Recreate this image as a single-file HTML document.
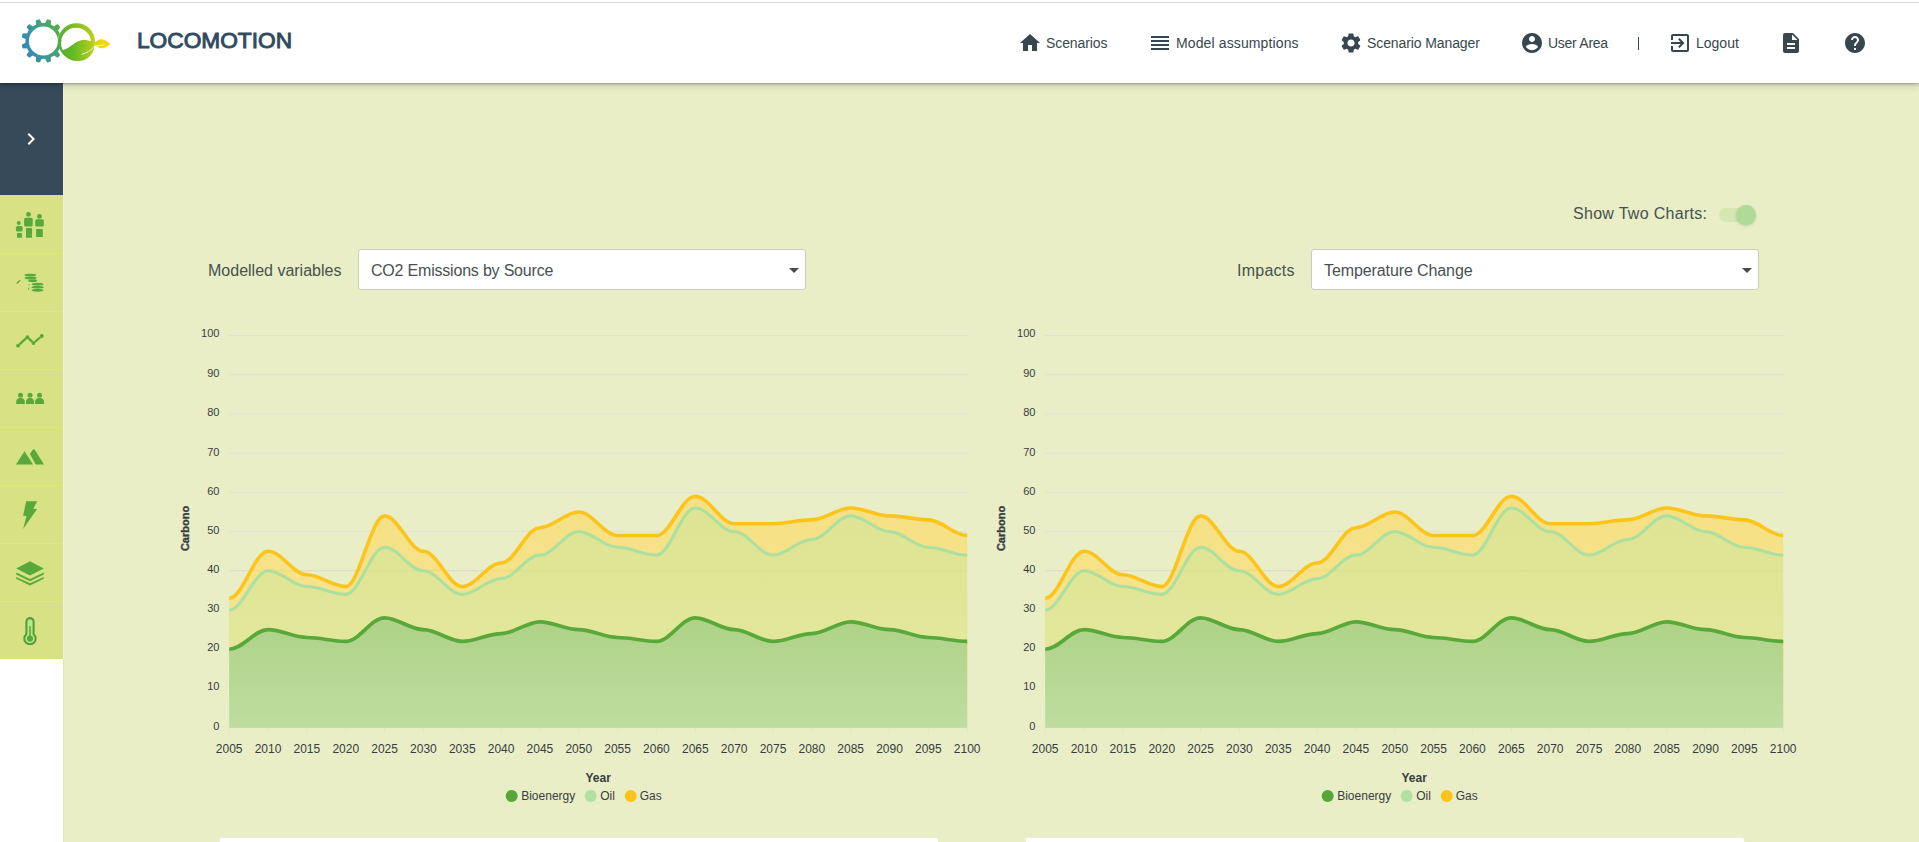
<!DOCTYPE html>
<html><head><meta charset="utf-8"><title>LOCOMOTION</title>
<style>
html,body{margin:0;padding:0;}
html{width:1919px;height:842px;overflow:hidden;background:#e9eec7;}
body{width:1919px;height:842px;overflow:hidden;position:relative;background:#e9eec7;font-family:"Liberation Sans",sans-serif;}
#hdr{position:absolute;left:0;top:0;width:1919px;height:82.5px;background:#fff;border-top:1px solid #fff;box-sizing:border-box;box-shadow:0 1px 3px rgba(0,0,0,.28),0 3px 7px rgba(0,0,0,.13);z-index:5;}
#hdr:before{content:'';position:absolute;left:0;top:0.5px;width:100%;height:1px;background:#d6d6d6;}
#side{position:absolute;left:0;top:82px;width:63px;height:760px;background:#fff;z-index:2;box-shadow:1px 0 0 rgba(120,130,90,.07);}
#side .sep{position:absolute;left:0;top:113px;width:63px;height:464px;background:#dadeb6;}
#side .tog{position:absolute;left:0;top:0;width:63px;height:113px;background:#364a59;}
#side .it{position:absolute;left:0;width:63px;height:57px;background:#d8e285;}
.nav{position:absolute;top:0;font-size:14px;color:#37474f;line-height:20px;white-space:nowrap;}
.lbl{position:absolute;font-size:16px;color:#47514f;white-space:nowrap;}
.sel{position:absolute;width:446px;height:39px;background:#fff;border:1px solid #cbcdc1;border-radius:3px;box-sizing:content-box;}
.sel span{position:absolute;left:12px;top:11.6px;font-size:16px;color:#495054;white-space:nowrap;}
.sel i{position:absolute;right:6px;top:18px;width:0;height:0;border-left:5px solid transparent;border-right:5px solid transparent;border-top:5px solid #4a4a4a;}
.wb{position:absolute;top:838px;height:4px;width:718px;background:#fff;border-radius:2px 2px 0 0;box-shadow:0 0 3px rgba(255,255,255,.6);}
svg text{font-family:"Liberation Sans",sans-serif;}
.yl{font-size:11px;fill:#373d3f;}
.xl{font-size:12px;fill:#373d3f;}
.at{font-size:12px;font-weight:bold;fill:#373d3f;}
.at2{font-size:11px;font-weight:bold;fill:#373d3f;stroke:#373d3f;stroke-width:0.35px;}
.lg{font-size:12px;fill:#373d3f;}
</style></head><body>

<div id="hdr">
<svg style="position:absolute;left:0;top:-1px" width="130" height="82" viewBox="0 0 130 82">
<defs>
<linearGradient id="lg1" gradientUnits="userSpaceOnUse" x1="21" y1="50" x2="64" y2="30"><stop offset="0" stop-color="#2f84c4"/><stop offset="0.45" stop-color="#3d9c93"/><stop offset="1" stop-color="#57b13f"/></linearGradient>
<linearGradient id="lg2" gradientUnits="userSpaceOnUse" x1="58" y1="0" x2="96" y2="0"><stop offset="0" stop-color="#52ad3c"/><stop offset="0.5" stop-color="#86bf22"/><stop offset="1" stop-color="#c4d31b"/></linearGradient>
<linearGradient id="lg4" gradientUnits="userSpaceOnUse" x1="61" y1="0" x2="95" y2="0"><stop offset="0" stop-color="#56b030"/><stop offset="0.35" stop-color="#62b925"/><stop offset="1" stop-color="#c0d01e"/></linearGradient>
<linearGradient id="lg3" gradientUnits="userSpaceOnUse" x1="93" y1="0" x2="110" y2="0"><stop offset="0" stop-color="#cfd61c"/><stop offset="0.6" stop-color="#f5d90a"/><stop offset="1" stop-color="#ffd200"/></linearGradient>
</defs>
<path fill="url(#lg1)" fill-rule="evenodd" d="M 25.40 40.90 a 18.00 18.00 0 1 1 36.00 0 a 18.00 18.00 0 1 1 -36.00 0 Z M 28.90 40.90 a 14.50 14.50 0 1 0 29.00 0 a 14.50 14.50 0 1 0 -29.00 0 Z"/>
<path fill="url(#lg1)" stroke="url(#lg1)" stroke-width="2.4" stroke-linejoin="round" d="M56.61 51.60 L58.86 54.82 L57.32 56.36 L54.10 54.11 Z M49.49 56.77 L49.83 60.68 L47.72 61.25 L46.06 57.69 Z M40.74 57.69 L39.08 61.25 L36.97 60.68 L37.31 56.77 Z M32.70 54.11 L29.48 56.36 L27.94 54.82 L30.19 51.60 Z M27.53 46.99 L23.62 47.33 L23.05 45.22 L26.61 43.56 Z M26.61 38.24 L23.05 36.58 L23.62 34.47 L27.53 34.81 Z M30.19 30.20 L27.94 26.98 L29.48 25.44 L32.70 27.69 Z M37.31 25.03 L36.97 21.12 L39.08 20.55 L40.74 24.11 Z M46.06 24.11 L47.72 20.55 L49.83 21.12 L49.49 25.03 Z M54.10 27.69 L57.32 25.44 L58.86 26.98 L56.61 30.20 Z "/>
<path fill="none" stroke="#fff" stroke-width="0.7" d="M 61.6 30.5 C 59.6 34, 58.2 37.5, 57.9 41"/>
<path fill="url(#lg2)" fill-rule="evenodd" d="M 58.00 41.70 a 18.50 18.50 0 1 1 37.00 0 a 18.50 18.50 0 1 1 -37.00 0 Z M 61.00 42.85 a 15.05 15.05 0 1 0 30.10 0 a 15.05 15.05 0 1 0 -30.10 0 Z"/>
<path fill="url(#lg4)" d="M 61.4 50.4 C 66 49.5, 69 47.5, 72.1 45 C 75 42.5, 77 41.2, 80.5 40.4 C 84 39.7, 89 40.2, 92.6 42 C 94 44, 94.6 45.5, 94.3 47.5 C 93.6 51, 92.4 53.5, 90 55.9 C 87.5 58.5, 84.5 60.2, 81 60.8 C 77.5 61.3, 73.5 61, 70 59.4 C 66.5 57.8, 63.2 54.5, 61.4 50.4 Z"/>
<path fill="url(#lg3)" d="M 92.8 42.2 C 94.5 42.6, 96 41.8, 97.5 40.6 C 99.5 39, 101.5 38.8, 104 39.8 C 106.5 40.8, 108.5 42.2, 110.2 44 C 108.5 45.6, 106.5 47, 104 47.9 C 101.5 48.7, 99 48.3, 97.2 46.6 C 96.2 45.7, 95.2 45.3, 94.2 45.6 Z"/>
<path fill="none" stroke="#fff" stroke-width="0.75" stroke-linecap="round" d="M 82.2 54.3 C 86.5 53, 91.5 50.5, 94.2 46.2 C 97 45.6, 101 45.6, 104.5 44.6"/>
</svg>
<div style="position:absolute;left:137px;top:25.5px;font-size:22.7px;font-weight:normal;color:#2f4a60;-webkit-text-stroke:0.95px #2f4a60;letter-spacing:0px;line-height:26px;white-space:nowrap;">LOCOMOTION</div>
<svg style="position:absolute;left:1018px;top:30px" width="24" height="24" viewBox="0 0 24 24"><path fill="#37474f" d="M10 20v-6h4v6h5v-8h3L12 3 2 12h3v8z"/></svg>
<div class="nav" style="left:1046px;top:32px;letter-spacing:-0.1px">Scenarios</div>
<svg style="position:absolute;left:1148px;top:30px" width="24" height="24" viewBox="0 0 24 24"><path fill="#37474f" d="M3 15h18v-2H3v2zm0 4h18v-2H3v2zm0-8h18V9H3v2zm0-6v2h18V5H3z"/></svg>
<div class="nav" style="left:1176px;top:32px;letter-spacing:0.12px">Model assumptions</div>
<svg style="position:absolute;left:1339px;top:30px" width="24" height="24" viewBox="0 0 24 24"><path fill="#37474f" d="M19.14 12.94c.04-.3.06-.61.06-.94 0-.32-.02-.64-.07-.94l2.03-1.58c.18-.14.23-.41.12-.61l-1.92-3.32c-.12-.22-.37-.29-.59-.22l-2.39.96c-.5-.38-1.03-.7-1.62-.94l-.36-2.54c-.04-.24-.24-.41-.48-.41h-3.84c-.24 0-.43.17-.47.41l-.36 2.54c-.59.24-1.13.57-1.62.94l-2.39-.96c-.22-.08-.47 0-.59.22L2.74 8.87c-.12.21-.08.47.12.61l2.03 1.58c-.05.3-.09.63-.09.94s.02.64.07.94l-2.03 1.58c-.18.14-.23.41-.12.61l1.92 3.32c.12.22.37.29.59.22l2.39-.96c.5.38 1.03.7 1.62.94l.36 2.54c.05.24.24.41.48.41h3.84c.24 0 .44-.17.47-.41l.36-2.54c.59-.24 1.13-.56 1.62-.94l2.39.96c.22.08.47 0 .59-.22l1.92-3.32c.12-.22.07-.47-.12-.61l-2.01-1.58zM12 15.6c-1.98 0-3.6-1.62-3.6-3.6s1.62-3.6 3.6-3.6 3.6 1.62 3.6 3.6-1.62 3.6-3.6 3.6z"/></svg>
<div class="nav" style="left:1367px;top:32px;letter-spacing:-0.1px">Scenario Manager</div>
<svg style="position:absolute;left:1520px;top:30px" width="24" height="24" viewBox="0 0 24 24"><path fill="#37474f" d="M12 2C6.48 2 2 6.48 2 12s4.48 10 10 10 10-4.48 10-10S17.52 2 12 2zm0 3c1.66 0 3 1.34 3 3s-1.34 3-3 3-3-1.34-3-3 1.34-3 3-3zm0 14.2c-2.5 0-4.71-1.28-6-3.22.03-1.99 4-3.08 6-3.08 1.99 0 5.97 1.09 6 3.08-1.29 1.94-3.5 3.22-6 3.22z"/></svg>
<div class="nav" style="left:1548px;top:32px;letter-spacing:-0.27px">User Area</div>
<div style="position:absolute;left:1637.5px;top:36px;width:1px;height:13px;background:#37474f"></div>
<svg style="position:absolute;left:1668px;top:30px" width="24" height="24" viewBox="0 0 24 24"><path fill="#37474f" d="M10.09 15.59L11.5 17l5-5-5-5-1.41 1.41L12.67 11H3v2h9.67l-2.58 2.59zM19 3H5c-1.11 0-2 .9-2 2v4h2V5h14v14H5v-4H3v4c0 1.1.89 2 2 2h14c1.1 0 2-.9 2-2V5c0-1.1-.9-2-2-2z"/></svg>
<div class="nav" style="left:1696px;top:32px">Logout</div>
<svg style="position:absolute;left:1779px;top:30px" width="24" height="24" viewBox="0 0 24 24"><path fill="#37474f" d="M14 2H6c-1.1 0-1.99.9-1.99 2L4 20c0 1.1.89 2 1.99 2H18c1.1 0 2-.9 2-2V8l-6-6zm2 16H8v-2h8v2zm0-4H8v-2h8v2zm-3-5V3.5L18.5 9H13z"/></svg>
<svg style="position:absolute;left:1843px;top:30px" width="24" height="24" viewBox="0 0 24 24"><path fill="#37474f" d="M12 2C6.48 2 2 6.48 2 12s4.48 10 10 10 10-4.48 10-10S17.52 2 12 2zm1 17h-2v-2h2v2zm2.07-7.75l-.9.92C13.45 12.9 13 13.5 13 15h-2v-.5c0-1.1.45-2.1 1.17-2.83l1.24-1.26c.37-.36.59-.86.59-1.41 0-1.1-.9-2-2-2s-2 .9-2 2H8c0-2.21 1.79-4 4-4s4 1.79 4 4c0 .88-.36 1.68-.93 2.25z"/></svg>
</div>
<div id="side"><div class="sep"></div><div class="tog"><svg style="position:absolute;left:19px;top:45px" width="24" height="24" viewBox="0 0 24 24"><path fill="#fff" d="M10 6L8.59 7.41 13.17 12l-4.58 4.59L10 18l6-6z"/></svg></div>
<div class="it" style="top:113px;height:57.5px"></div>
<div class="it" style="top:171.5px;height:57px"></div>
<div class="it" style="top:229.5px;height:57px"></div>
<div class="it" style="top:287.5px;height:57px"></div>
<div class="it" style="top:345.5px;height:57px"></div>
<div class="it" style="top:403.5px;height:57px"></div>
<div class="it" style="top:461.5px;height:57px"></div>
<div class="it" style="top:519.5px;height:57.5px"></div>
</div>
<div style="position:absolute;left:63px;top:82px;width:1px;height:577px;background:rgba(255,255,255,.45);z-index:2"></div>
<svg style="position:absolute;left:0;top:0;z-index:3" width="64" height="842" viewBox="0 0 64 842">
<g fill="#5aa83a" stroke="#b4ee86" stroke-opacity="0.55" stroke-width="0.9" paint-order="stroke">
<circle cx="18.8" cy="223.0" r="1.9"/>
<rect x="15.9" y="225.9" width="6.7" height="5.7" rx="1.6"/>
<rect x="17.0" y="233.0" width="4.9" height="4.8" rx="0.4"/>
<circle cx="28.5" cy="214.3" r="2.4"/>
<rect x="24.1" y="217.8" width="8.6" height="8.8" rx="1.6"/>
<rect x="26.0" y="228.1" width="6.0" height="9.7" rx="0.4"/>
<circle cx="39.5" cy="216.4" r="2.4"/>
<rect x="35.2" y="219.3" width="8.6" height="7.3" rx="1.6"/>
<rect x="36.1" y="229.0" width="6.7" height="7.9" rx="0.4"/>
<rect x="24.3" y="274.2" width="12.2" height="7.4" rx="5" ry="1.6" fill="#b4ee86" fill-opacity="0.7" stroke="none"/>
<rect x="31.4" y="283.4" width="12.4" height="7.8" rx="5" ry="1.6" fill="#b4ee86" fill-opacity="0.7" stroke="none"/>
<ellipse cx="30.4" cy="275.1" rx="6.0" ry="1.45"/>
<ellipse cx="30.6" cy="278.0" rx="6.2" ry="1.45"/>
<ellipse cx="32.6" cy="280.8" rx="4.4" ry="1.45"/>
<ellipse cx="37.6" cy="284.2" rx="6.0" ry="1.45"/>
<ellipse cx="37.6" cy="287.3" rx="6.2" ry="1.45"/>
<ellipse cx="37.6" cy="290.3" rx="6.0" ry="1.45"/>
<path d="M 16.0 283.8 L 18.6 280.6 L 21.0 280.0 L 18.0 283.6 Z"/>
<path d="M 28.8 284.2 l 0.9 -0.3 l -0.3 1.6 l -0.9 0.3 Z"/>
<path d="M 28.4 287.8 l 1.0 -0.4 l -0.4 2.0 l -1.0 0.4 Z"/>
<path fill="none" stroke="#5aa83a" stroke-opacity="1" stroke-width="2.3" stroke-linejoin="round" stroke-linecap="round" d="M 18.1 345.7 L 27.4 337.2 L 33.5 343.1 L 41.8 336.0"/>
<circle cx="18.1" cy="345.7" r="1.9"/>
<circle cx="27.4" cy="337.2" r="1.9"/>
<circle cx="33.5" cy="343.1" r="1.9"/>
<circle cx="41.8" cy="336.0" r="1.9"/>
<circle cx="20.5" cy="395.3" r="2.5"/>
<path d="M 16.2 404.0 L 16.2 401.6 C 16.2 399.6 17.6 398.4 19.3 398.0 L 21.7 398.0 C 23.4 398.4 24.8 399.6 24.8 401.6 L 24.8 404.0 Z"/>
<circle cx="30.0" cy="395.3" r="2.5"/>
<path d="M 26.0 404.0 L 26.0 401.6 C 26.0 399.6 27.4 398.4 28.8 398.0 L 31.2 398.0 C 32.6 398.4 34.0 399.6 34.0 401.6 L 34.0 404.0 Z"/>
<circle cx="39.5" cy="395.3" r="2.5"/>
<path d="M 35.0 404.0 L 35.0 401.6 C 35.0 399.6 36.4 398.4 38.3 398.0 L 40.7 398.0 C 42.6 398.4 44.0 399.6 44.0 401.6 L 44.0 404.0 Z"/>
<path d="M 24.5 451.3 L 33.0 464.6 L 16.0 464.6 Z"/>
<path d="M 32.9 449.4 L 34.6 449.4 L 44.0 464.6 L 35.8 464.6 L 29.9 454.0 Z"/>
<path d="M 26.2 501.2 L 37.1 501.2 L 33.3 508.7 L 37.1 508.9 L 23.1 529.0 L 26.5 516.0 L 23.1 515.7 Z"/>
<path d="M 30.0 561.3 L 43.8 568.5 L 30.0 575.6 L 16.2 568.5 Z"/>
<path d="M 16.2 572.6 L 30.0 579.0 L 43.8 572.6 L 43.8 574.4 L 30.0 581.2 L 16.2 574.4 Z"/>
<path d="M 16.2 576.9 L 30.0 583.3 L 43.8 576.9 L 43.8 578.7 L 30.0 585.5 L 16.2 578.7 Z"/>
</g>
<path fill="#b6ea8a" stroke="#579f37" stroke-width="2.1" stroke-linejoin="round" d="M 26.4 621.7 a 3.6 3.6 0 0 1 7.2 0 L 33.6 634.2 a 5.7 5.7 0 1 1 -7.2 0 Z"/>
<circle cx="30.0" cy="638.6" r="3.1" fill="#5aa83a"/>
<rect x="29.2" y="626.2" width="1.6" height="11" fill="#5aa83a"/>
</svg>
<div class="lbl" style="left:1573px;top:204.5px;letter-spacing:0.3px">Show Two Charts:</div>
<div style="position:absolute;left:1718.5px;top:207.5px;width:35.5px;height:14px;border-radius:7px;background:#d6e7b4"></div>
<div style="position:absolute;left:1736px;top:204.5px;width:20px;height:20px;border-radius:10px;background:#afdb96;box-shadow:0 1px 3px rgba(0,0,0,.16)"></div>
<div class="lbl" style="left:208px;top:261.6px">Modelled variables</div>
<div class="sel" style="left:358px;top:249px"><span style="letter-spacing:-0.2px">CO2 Emissions by Source</span><i></i></div>
<div class="lbl" style="left:1237px;top:261.6px;letter-spacing:0.25px">Impacts</div>
<div class="sel" style="left:1311px;top:249px"><span style="letter-spacing:-0.1px">Temperature Change</span><i></i></div>
<svg style="position:absolute;left:0;top:0;z-index:1" width="1919" height="842" viewBox="0 0 1919 842">
<defs>
<linearGradient id="g_bio" gradientUnits="userSpaceOnUse" x1="0" y1="618" x2="0" y2="728"><stop offset="0" stop-color="#aed287"/><stop offset="1" stop-color="#bedda0"/></linearGradient>
<linearGradient id="g_oil" gradientUnits="userSpaceOnUse" x1="0" y1="508" x2="0" y2="650"><stop offset="0" stop-color="#dee493"/><stop offset="1" stop-color="#e3e79a"/></linearGradient>
<linearGradient id="g_gas" gradientUnits="userSpaceOnUse" x1="0" y1="496" x2="0" y2="620"><stop offset="0" stop-color="#f5e084"/><stop offset="1" stop-color="#f6e38c"/></linearGradient>
</defs>
<g>
<line x1="229.2" x2="967.2" y1="727.70" y2="727.70" stroke="#e0e1d5" stroke-width="1"/>
<text x="219.4" y="729.50" text-anchor="end" class="yl">0</text>
<line x1="229.2" x2="967.2" y1="688.48" y2="688.48" stroke="#e0e1d5" stroke-width="1"/>
<text x="219.4" y="690.28" text-anchor="end" class="yl">10</text>
<line x1="229.2" x2="967.2" y1="649.26" y2="649.26" stroke="#e0e1d5" stroke-width="1"/>
<text x="219.4" y="651.06" text-anchor="end" class="yl">20</text>
<line x1="229.2" x2="967.2" y1="610.04" y2="610.04" stroke="#e0e1d5" stroke-width="1"/>
<text x="219.4" y="611.84" text-anchor="end" class="yl">30</text>
<line x1="229.2" x2="967.2" y1="570.82" y2="570.82" stroke="#e0e1d5" stroke-width="1"/>
<text x="219.4" y="573.32" text-anchor="end" class="yl">40</text>
<line x1="229.2" x2="967.2" y1="531.60" y2="531.60" stroke="#e0e1d5" stroke-width="1"/>
<text x="219.4" y="534.10" text-anchor="end" class="yl">50</text>
<line x1="229.2" x2="967.2" y1="492.38" y2="492.38" stroke="#e0e1d5" stroke-width="1"/>
<text x="219.4" y="494.88" text-anchor="end" class="yl">60</text>
<line x1="229.2" x2="967.2" y1="453.16" y2="453.16" stroke="#e0e1d5" stroke-width="1"/>
<text x="219.4" y="455.66" text-anchor="end" class="yl">70</text>
<line x1="229.2" x2="967.2" y1="413.94" y2="413.94" stroke="#e0e1d5" stroke-width="1"/>
<text x="219.4" y="416.44" text-anchor="end" class="yl">80</text>
<line x1="229.2" x2="967.2" y1="374.72" y2="374.72" stroke="#e0e1d5" stroke-width="1"/>
<text x="219.4" y="377.22" text-anchor="end" class="yl">90</text>
<line x1="229.2" x2="967.2" y1="335.50" y2="335.50" stroke="#e0e1d5" stroke-width="1"/>
<text x="219.4" y="337.30" text-anchor="end" class="yl">100</text>
<line x1="229.20" x2="229.20" y1="727.7" y2="733.7" stroke="#e2e7c3" stroke-width="1"/>
<text x="229.20" y="752.6" text-anchor="middle" class="xl">2005</text>
<line x1="268.04" x2="268.04" y1="727.7" y2="733.7" stroke="#e2e7c3" stroke-width="1"/>
<text x="268.04" y="752.6" text-anchor="middle" class="xl">2010</text>
<line x1="306.88" x2="306.88" y1="727.7" y2="733.7" stroke="#e2e7c3" stroke-width="1"/>
<text x="306.88" y="752.6" text-anchor="middle" class="xl">2015</text>
<line x1="345.73" x2="345.73" y1="727.7" y2="733.7" stroke="#e2e7c3" stroke-width="1"/>
<text x="345.73" y="752.6" text-anchor="middle" class="xl">2020</text>
<line x1="384.57" x2="384.57" y1="727.7" y2="733.7" stroke="#e2e7c3" stroke-width="1"/>
<text x="384.57" y="752.6" text-anchor="middle" class="xl">2025</text>
<line x1="423.41" x2="423.41" y1="727.7" y2="733.7" stroke="#e2e7c3" stroke-width="1"/>
<text x="423.41" y="752.6" text-anchor="middle" class="xl">2030</text>
<line x1="462.25" x2="462.25" y1="727.7" y2="733.7" stroke="#e2e7c3" stroke-width="1"/>
<text x="462.25" y="752.6" text-anchor="middle" class="xl">2035</text>
<line x1="501.09" x2="501.09" y1="727.7" y2="733.7" stroke="#e2e7c3" stroke-width="1"/>
<text x="501.09" y="752.6" text-anchor="middle" class="xl">2040</text>
<line x1="539.94" x2="539.94" y1="727.7" y2="733.7" stroke="#e2e7c3" stroke-width="1"/>
<text x="539.94" y="752.6" text-anchor="middle" class="xl">2045</text>
<line x1="578.78" x2="578.78" y1="727.7" y2="733.7" stroke="#e2e7c3" stroke-width="1"/>
<text x="578.78" y="752.6" text-anchor="middle" class="xl">2050</text>
<line x1="617.62" x2="617.62" y1="727.7" y2="733.7" stroke="#e2e7c3" stroke-width="1"/>
<text x="617.62" y="752.6" text-anchor="middle" class="xl">2055</text>
<line x1="656.46" x2="656.46" y1="727.7" y2="733.7" stroke="#e2e7c3" stroke-width="1"/>
<text x="656.46" y="752.6" text-anchor="middle" class="xl">2060</text>
<line x1="695.31" x2="695.31" y1="727.7" y2="733.7" stroke="#e2e7c3" stroke-width="1"/>
<text x="695.31" y="752.6" text-anchor="middle" class="xl">2065</text>
<line x1="734.15" x2="734.15" y1="727.7" y2="733.7" stroke="#e2e7c3" stroke-width="1"/>
<text x="734.15" y="752.6" text-anchor="middle" class="xl">2070</text>
<line x1="772.99" x2="772.99" y1="727.7" y2="733.7" stroke="#e2e7c3" stroke-width="1"/>
<text x="772.99" y="752.6" text-anchor="middle" class="xl">2075</text>
<line x1="811.83" x2="811.83" y1="727.7" y2="733.7" stroke="#e2e7c3" stroke-width="1"/>
<text x="811.83" y="752.6" text-anchor="middle" class="xl">2080</text>
<line x1="850.67" x2="850.67" y1="727.7" y2="733.7" stroke="#e2e7c3" stroke-width="1"/>
<text x="850.67" y="752.6" text-anchor="middle" class="xl">2085</text>
<line x1="889.52" x2="889.52" y1="727.7" y2="733.7" stroke="#e2e7c3" stroke-width="1"/>
<text x="889.52" y="752.6" text-anchor="middle" class="xl">2090</text>
<line x1="928.36" x2="928.36" y1="727.7" y2="733.7" stroke="#e2e7c3" stroke-width="1"/>
<text x="928.36" y="752.6" text-anchor="middle" class="xl">2095</text>
<line x1="967.20" x2="967.20" y1="727.7" y2="733.7" stroke="#e2e7c3" stroke-width="1"/>
<text x="967.20" y="752.6" text-anchor="middle" class="xl">2100</text>
<path d="M 229.20 598.27 C 242.79 598.27 254.45 551.21 268.04 551.21 C 281.64 551.21 293.29 574.74 306.88 574.74 C 320.48 574.74 332.13 586.51 345.73 586.51 C 359.32 586.51 370.97 515.91 384.57 515.91 C 398.16 515.91 409.82 551.21 423.41 551.21 C 437.01 551.21 448.66 586.51 462.25 586.51 C 475.85 586.51 487.50 562.98 501.09 562.98 C 514.69 562.98 526.34 527.68 539.94 527.68 C 553.53 527.68 565.18 511.99 578.78 511.99 C 592.37 511.99 604.03 535.52 617.62 535.52 C 631.22 535.52 642.87 535.52 656.46 535.52 C 670.06 535.52 681.71 496.30 695.31 496.30 C 708.90 496.30 720.55 523.76 734.15 523.76 C 747.74 523.76 759.39 523.76 772.99 523.76 C 786.58 523.76 798.24 519.83 811.83 519.83 C 825.43 519.83 837.08 508.07 850.67 508.07 C 864.27 508.07 875.92 515.91 889.52 515.91 C 903.11 515.91 914.76 519.83 928.36 519.83 C 941.95 519.83 953.61 535.52 967.20 535.52 L 967.20 727.70 L 229.20 727.70 Z" fill="url(#g_gas)" stroke="none"/>
<path d="M 229.20 610.04 C 242.79 610.04 254.45 570.82 268.04 570.82 C 281.64 570.82 293.29 586.51 306.88 586.51 C 320.48 586.51 332.13 594.35 345.73 594.35 C 359.32 594.35 370.97 547.29 384.57 547.29 C 398.16 547.29 409.82 570.82 423.41 570.82 C 437.01 570.82 448.66 594.35 462.25 594.35 C 475.85 594.35 487.50 578.66 501.09 578.66 C 514.69 578.66 526.34 555.13 539.94 555.13 C 553.53 555.13 565.18 531.60 578.78 531.60 C 592.37 531.60 604.03 547.29 617.62 547.29 C 631.22 547.29 642.87 555.13 656.46 555.13 C 670.06 555.13 681.71 508.07 695.31 508.07 C 708.90 508.07 720.55 531.60 734.15 531.60 C 747.74 531.60 759.39 555.13 772.99 555.13 C 786.58 555.13 798.24 539.44 811.83 539.44 C 825.43 539.44 837.08 515.91 850.67 515.91 C 864.27 515.91 875.92 531.60 889.52 531.60 C 903.11 531.60 914.76 547.29 928.36 547.29 C 941.95 547.29 953.61 555.13 967.20 555.13 L 967.20 727.70 L 229.20 727.70 Z" fill="url(#g_oil)" stroke="none"/>
<path d="M 229.20 649.26 C 242.79 649.26 254.45 629.65 268.04 629.65 C 281.64 629.65 293.29 637.49 306.88 637.49 C 320.48 637.49 332.13 641.42 345.73 641.42 C 359.32 641.42 370.97 617.88 384.57 617.88 C 398.16 617.88 409.82 629.65 423.41 629.65 C 437.01 629.65 448.66 641.42 462.25 641.42 C 475.85 641.42 487.50 633.57 501.09 633.57 C 514.69 633.57 526.34 621.81 539.94 621.81 C 553.53 621.81 565.18 629.65 578.78 629.65 C 592.37 629.65 604.03 637.49 617.62 637.49 C 631.22 637.49 642.87 641.42 656.46 641.42 C 670.06 641.42 681.71 617.88 695.31 617.88 C 708.90 617.88 720.55 629.65 734.15 629.65 C 747.74 629.65 759.39 641.42 772.99 641.42 C 786.58 641.42 798.24 633.57 811.83 633.57 C 825.43 633.57 837.08 621.81 850.67 621.81 C 864.27 621.81 875.92 629.65 889.52 629.65 C 903.11 629.65 914.76 637.49 928.36 637.49 C 941.95 637.49 953.61 641.42 967.20 641.42 L 967.20 727.70 L 229.20 727.70 Z" fill="url(#g_bio)" stroke="none"/>
<line x1="229.2" x2="967.2" y1="570.82" y2="570.82" stroke="#000" stroke-opacity="0.035" stroke-width="1"/>
<path d="M 229.20 598.27 C 242.79 598.27 254.45 551.21 268.04 551.21 C 281.64 551.21 293.29 574.74 306.88 574.74 C 320.48 574.74 332.13 586.51 345.73 586.51 C 359.32 586.51 370.97 515.91 384.57 515.91 C 398.16 515.91 409.82 551.21 423.41 551.21 C 437.01 551.21 448.66 586.51 462.25 586.51 C 475.85 586.51 487.50 562.98 501.09 562.98 C 514.69 562.98 526.34 527.68 539.94 527.68 C 553.53 527.68 565.18 511.99 578.78 511.99 C 592.37 511.99 604.03 535.52 617.62 535.52 C 631.22 535.52 642.87 535.52 656.46 535.52 C 670.06 535.52 681.71 496.30 695.31 496.30 C 708.90 496.30 720.55 523.76 734.15 523.76 C 747.74 523.76 759.39 523.76 772.99 523.76 C 786.58 523.76 798.24 519.83 811.83 519.83 C 825.43 519.83 837.08 508.07 850.67 508.07 C 864.27 508.07 875.92 515.91 889.52 515.91 C 903.11 515.91 914.76 519.83 928.36 519.83 C 941.95 519.83 953.61 535.52 967.20 535.52" fill="none" stroke="#fcc41d" stroke-width="3.6" stroke-linecap="butt"/>
<path d="M 229.20 610.04 C 242.79 610.04 254.45 570.82 268.04 570.82 C 281.64 570.82 293.29 586.51 306.88 586.51 C 320.48 586.51 332.13 594.35 345.73 594.35 C 359.32 594.35 370.97 547.29 384.57 547.29 C 398.16 547.29 409.82 570.82 423.41 570.82 C 437.01 570.82 448.66 594.35 462.25 594.35 C 475.85 594.35 487.50 578.66 501.09 578.66 C 514.69 578.66 526.34 555.13 539.94 555.13 C 553.53 555.13 565.18 531.60 578.78 531.60 C 592.37 531.60 604.03 547.29 617.62 547.29 C 631.22 547.29 642.87 555.13 656.46 555.13 C 670.06 555.13 681.71 508.07 695.31 508.07 C 708.90 508.07 720.55 531.60 734.15 531.60 C 747.74 531.60 759.39 555.13 772.99 555.13 C 786.58 555.13 798.24 539.44 811.83 539.44 C 825.43 539.44 837.08 515.91 850.67 515.91 C 864.27 515.91 875.92 531.60 889.52 531.60 C 903.11 531.60 914.76 547.29 928.36 547.29 C 941.95 547.29 953.61 555.13 967.20 555.13" fill="none" stroke="#abe0a0" stroke-width="3.1" stroke-linecap="butt"/>
<path d="M 229.20 649.26 C 242.79 649.26 254.45 629.65 268.04 629.65 C 281.64 629.65 293.29 637.49 306.88 637.49 C 320.48 637.49 332.13 641.42 345.73 641.42 C 359.32 641.42 370.97 617.88 384.57 617.88 C 398.16 617.88 409.82 629.65 423.41 629.65 C 437.01 629.65 448.66 641.42 462.25 641.42 C 475.85 641.42 487.50 633.57 501.09 633.57 C 514.69 633.57 526.34 621.81 539.94 621.81 C 553.53 621.81 565.18 629.65 578.78 629.65 C 592.37 629.65 604.03 637.49 617.62 637.49 C 631.22 637.49 642.87 641.42 656.46 641.42 C 670.06 641.42 681.71 617.88 695.31 617.88 C 708.90 617.88 720.55 629.65 734.15 629.65 C 747.74 629.65 759.39 641.42 772.99 641.42 C 786.58 641.42 798.24 633.57 811.83 633.57 C 825.43 633.57 837.08 621.81 850.67 621.81 C 864.27 621.81 875.92 629.65 889.52 629.65 C 903.11 629.65 914.76 637.49 928.36 637.49 C 941.95 637.49 953.61 641.42 967.20 641.42" fill="none" stroke="#58a83a" stroke-width="3.7" stroke-linecap="butt"/>
<text x="598.2" y="781.5" text-anchor="middle" class="at">Year</text>
<text transform="translate(188.5,528.5) rotate(-90)" text-anchor="middle" class="at2">Carbono</text>
<circle cx="511.7" cy="796" r="6" fill="#57a639"/>
<text x="521.2" y="800" class="lg">Bioenergy</text>
<circle cx="590.7" cy="796" r="6" fill="#b2e0a2"/>
<text x="600.2" y="800" class="lg">Oil</text>
<circle cx="630.7" cy="796" r="6" fill="#fcc419"/>
<text x="639.7" y="800" class="lg">Gas</text>
</g>
<g>
<line x1="1045.2" x2="1783.2" y1="727.70" y2="727.70" stroke="#e0e1d5" stroke-width="1"/>
<text x="1035.4" y="729.50" text-anchor="end" class="yl">0</text>
<line x1="1045.2" x2="1783.2" y1="688.48" y2="688.48" stroke="#e0e1d5" stroke-width="1"/>
<text x="1035.4" y="690.28" text-anchor="end" class="yl">10</text>
<line x1="1045.2" x2="1783.2" y1="649.26" y2="649.26" stroke="#e0e1d5" stroke-width="1"/>
<text x="1035.4" y="651.06" text-anchor="end" class="yl">20</text>
<line x1="1045.2" x2="1783.2" y1="610.04" y2="610.04" stroke="#e0e1d5" stroke-width="1"/>
<text x="1035.4" y="611.84" text-anchor="end" class="yl">30</text>
<line x1="1045.2" x2="1783.2" y1="570.82" y2="570.82" stroke="#e0e1d5" stroke-width="1"/>
<text x="1035.4" y="573.32" text-anchor="end" class="yl">40</text>
<line x1="1045.2" x2="1783.2" y1="531.60" y2="531.60" stroke="#e0e1d5" stroke-width="1"/>
<text x="1035.4" y="534.10" text-anchor="end" class="yl">50</text>
<line x1="1045.2" x2="1783.2" y1="492.38" y2="492.38" stroke="#e0e1d5" stroke-width="1"/>
<text x="1035.4" y="494.88" text-anchor="end" class="yl">60</text>
<line x1="1045.2" x2="1783.2" y1="453.16" y2="453.16" stroke="#e0e1d5" stroke-width="1"/>
<text x="1035.4" y="455.66" text-anchor="end" class="yl">70</text>
<line x1="1045.2" x2="1783.2" y1="413.94" y2="413.94" stroke="#e0e1d5" stroke-width="1"/>
<text x="1035.4" y="416.44" text-anchor="end" class="yl">80</text>
<line x1="1045.2" x2="1783.2" y1="374.72" y2="374.72" stroke="#e0e1d5" stroke-width="1"/>
<text x="1035.4" y="377.22" text-anchor="end" class="yl">90</text>
<line x1="1045.2" x2="1783.2" y1="335.50" y2="335.50" stroke="#e0e1d5" stroke-width="1"/>
<text x="1035.4" y="337.30" text-anchor="end" class="yl">100</text>
<line x1="1045.20" x2="1045.20" y1="727.7" y2="733.7" stroke="#e2e7c3" stroke-width="1"/>
<text x="1045.20" y="752.6" text-anchor="middle" class="xl">2005</text>
<line x1="1084.04" x2="1084.04" y1="727.7" y2="733.7" stroke="#e2e7c3" stroke-width="1"/>
<text x="1084.04" y="752.6" text-anchor="middle" class="xl">2010</text>
<line x1="1122.88" x2="1122.88" y1="727.7" y2="733.7" stroke="#e2e7c3" stroke-width="1"/>
<text x="1122.88" y="752.6" text-anchor="middle" class="xl">2015</text>
<line x1="1161.73" x2="1161.73" y1="727.7" y2="733.7" stroke="#e2e7c3" stroke-width="1"/>
<text x="1161.73" y="752.6" text-anchor="middle" class="xl">2020</text>
<line x1="1200.57" x2="1200.57" y1="727.7" y2="733.7" stroke="#e2e7c3" stroke-width="1"/>
<text x="1200.57" y="752.6" text-anchor="middle" class="xl">2025</text>
<line x1="1239.41" x2="1239.41" y1="727.7" y2="733.7" stroke="#e2e7c3" stroke-width="1"/>
<text x="1239.41" y="752.6" text-anchor="middle" class="xl">2030</text>
<line x1="1278.25" x2="1278.25" y1="727.7" y2="733.7" stroke="#e2e7c3" stroke-width="1"/>
<text x="1278.25" y="752.6" text-anchor="middle" class="xl">2035</text>
<line x1="1317.09" x2="1317.09" y1="727.7" y2="733.7" stroke="#e2e7c3" stroke-width="1"/>
<text x="1317.09" y="752.6" text-anchor="middle" class="xl">2040</text>
<line x1="1355.94" x2="1355.94" y1="727.7" y2="733.7" stroke="#e2e7c3" stroke-width="1"/>
<text x="1355.94" y="752.6" text-anchor="middle" class="xl">2045</text>
<line x1="1394.78" x2="1394.78" y1="727.7" y2="733.7" stroke="#e2e7c3" stroke-width="1"/>
<text x="1394.78" y="752.6" text-anchor="middle" class="xl">2050</text>
<line x1="1433.62" x2="1433.62" y1="727.7" y2="733.7" stroke="#e2e7c3" stroke-width="1"/>
<text x="1433.62" y="752.6" text-anchor="middle" class="xl">2055</text>
<line x1="1472.46" x2="1472.46" y1="727.7" y2="733.7" stroke="#e2e7c3" stroke-width="1"/>
<text x="1472.46" y="752.6" text-anchor="middle" class="xl">2060</text>
<line x1="1511.31" x2="1511.31" y1="727.7" y2="733.7" stroke="#e2e7c3" stroke-width="1"/>
<text x="1511.31" y="752.6" text-anchor="middle" class="xl">2065</text>
<line x1="1550.15" x2="1550.15" y1="727.7" y2="733.7" stroke="#e2e7c3" stroke-width="1"/>
<text x="1550.15" y="752.6" text-anchor="middle" class="xl">2070</text>
<line x1="1588.99" x2="1588.99" y1="727.7" y2="733.7" stroke="#e2e7c3" stroke-width="1"/>
<text x="1588.99" y="752.6" text-anchor="middle" class="xl">2075</text>
<line x1="1627.83" x2="1627.83" y1="727.7" y2="733.7" stroke="#e2e7c3" stroke-width="1"/>
<text x="1627.83" y="752.6" text-anchor="middle" class="xl">2080</text>
<line x1="1666.67" x2="1666.67" y1="727.7" y2="733.7" stroke="#e2e7c3" stroke-width="1"/>
<text x="1666.67" y="752.6" text-anchor="middle" class="xl">2085</text>
<line x1="1705.52" x2="1705.52" y1="727.7" y2="733.7" stroke="#e2e7c3" stroke-width="1"/>
<text x="1705.52" y="752.6" text-anchor="middle" class="xl">2090</text>
<line x1="1744.36" x2="1744.36" y1="727.7" y2="733.7" stroke="#e2e7c3" stroke-width="1"/>
<text x="1744.36" y="752.6" text-anchor="middle" class="xl">2095</text>
<line x1="1783.20" x2="1783.20" y1="727.7" y2="733.7" stroke="#e2e7c3" stroke-width="1"/>
<text x="1783.20" y="752.6" text-anchor="middle" class="xl">2100</text>
<path d="M 1045.20 598.27 C 1058.79 598.27 1070.45 551.21 1084.04 551.21 C 1097.64 551.21 1109.29 574.74 1122.88 574.74 C 1136.48 574.74 1148.13 586.51 1161.73 586.51 C 1175.32 586.51 1186.97 515.91 1200.57 515.91 C 1214.16 515.91 1225.82 551.21 1239.41 551.21 C 1253.01 551.21 1264.66 586.51 1278.25 586.51 C 1291.85 586.51 1303.50 562.98 1317.09 562.98 C 1330.69 562.98 1342.34 527.68 1355.94 527.68 C 1369.53 527.68 1381.18 511.99 1394.78 511.99 C 1408.37 511.99 1420.03 535.52 1433.62 535.52 C 1447.22 535.52 1458.87 535.52 1472.46 535.52 C 1486.06 535.52 1497.71 496.30 1511.31 496.30 C 1524.90 496.30 1536.55 523.76 1550.15 523.76 C 1563.74 523.76 1575.39 523.76 1588.99 523.76 C 1602.58 523.76 1614.24 519.83 1627.83 519.83 C 1641.43 519.83 1653.08 508.07 1666.67 508.07 C 1680.27 508.07 1691.92 515.91 1705.52 515.91 C 1719.11 515.91 1730.76 519.83 1744.36 519.83 C 1757.95 519.83 1769.61 535.52 1783.20 535.52 L 1783.20 727.70 L 1045.20 727.70 Z" fill="url(#g_gas)" stroke="none"/>
<path d="M 1045.20 610.04 C 1058.79 610.04 1070.45 570.82 1084.04 570.82 C 1097.64 570.82 1109.29 586.51 1122.88 586.51 C 1136.48 586.51 1148.13 594.35 1161.73 594.35 C 1175.32 594.35 1186.97 547.29 1200.57 547.29 C 1214.16 547.29 1225.82 570.82 1239.41 570.82 C 1253.01 570.82 1264.66 594.35 1278.25 594.35 C 1291.85 594.35 1303.50 578.66 1317.09 578.66 C 1330.69 578.66 1342.34 555.13 1355.94 555.13 C 1369.53 555.13 1381.18 531.60 1394.78 531.60 C 1408.37 531.60 1420.03 547.29 1433.62 547.29 C 1447.22 547.29 1458.87 555.13 1472.46 555.13 C 1486.06 555.13 1497.71 508.07 1511.31 508.07 C 1524.90 508.07 1536.55 531.60 1550.15 531.60 C 1563.74 531.60 1575.39 555.13 1588.99 555.13 C 1602.58 555.13 1614.24 539.44 1627.83 539.44 C 1641.43 539.44 1653.08 515.91 1666.67 515.91 C 1680.27 515.91 1691.92 531.60 1705.52 531.60 C 1719.11 531.60 1730.76 547.29 1744.36 547.29 C 1757.95 547.29 1769.61 555.13 1783.20 555.13 L 1783.20 727.70 L 1045.20 727.70 Z" fill="url(#g_oil)" stroke="none"/>
<path d="M 1045.20 649.26 C 1058.79 649.26 1070.45 629.65 1084.04 629.65 C 1097.64 629.65 1109.29 637.49 1122.88 637.49 C 1136.48 637.49 1148.13 641.42 1161.73 641.42 C 1175.32 641.42 1186.97 617.88 1200.57 617.88 C 1214.16 617.88 1225.82 629.65 1239.41 629.65 C 1253.01 629.65 1264.66 641.42 1278.25 641.42 C 1291.85 641.42 1303.50 633.57 1317.09 633.57 C 1330.69 633.57 1342.34 621.81 1355.94 621.81 C 1369.53 621.81 1381.18 629.65 1394.78 629.65 C 1408.37 629.65 1420.03 637.49 1433.62 637.49 C 1447.22 637.49 1458.87 641.42 1472.46 641.42 C 1486.06 641.42 1497.71 617.88 1511.31 617.88 C 1524.90 617.88 1536.55 629.65 1550.15 629.65 C 1563.74 629.65 1575.39 641.42 1588.99 641.42 C 1602.58 641.42 1614.24 633.57 1627.83 633.57 C 1641.43 633.57 1653.08 621.81 1666.67 621.81 C 1680.27 621.81 1691.92 629.65 1705.52 629.65 C 1719.11 629.65 1730.76 637.49 1744.36 637.49 C 1757.95 637.49 1769.61 641.42 1783.20 641.42 L 1783.20 727.70 L 1045.20 727.70 Z" fill="url(#g_bio)" stroke="none"/>
<line x1="1045.2" x2="1783.2" y1="570.82" y2="570.82" stroke="#000" stroke-opacity="0.035" stroke-width="1"/>
<path d="M 1045.20 598.27 C 1058.79 598.27 1070.45 551.21 1084.04 551.21 C 1097.64 551.21 1109.29 574.74 1122.88 574.74 C 1136.48 574.74 1148.13 586.51 1161.73 586.51 C 1175.32 586.51 1186.97 515.91 1200.57 515.91 C 1214.16 515.91 1225.82 551.21 1239.41 551.21 C 1253.01 551.21 1264.66 586.51 1278.25 586.51 C 1291.85 586.51 1303.50 562.98 1317.09 562.98 C 1330.69 562.98 1342.34 527.68 1355.94 527.68 C 1369.53 527.68 1381.18 511.99 1394.78 511.99 C 1408.37 511.99 1420.03 535.52 1433.62 535.52 C 1447.22 535.52 1458.87 535.52 1472.46 535.52 C 1486.06 535.52 1497.71 496.30 1511.31 496.30 C 1524.90 496.30 1536.55 523.76 1550.15 523.76 C 1563.74 523.76 1575.39 523.76 1588.99 523.76 C 1602.58 523.76 1614.24 519.83 1627.83 519.83 C 1641.43 519.83 1653.08 508.07 1666.67 508.07 C 1680.27 508.07 1691.92 515.91 1705.52 515.91 C 1719.11 515.91 1730.76 519.83 1744.36 519.83 C 1757.95 519.83 1769.61 535.52 1783.20 535.52" fill="none" stroke="#fcc41d" stroke-width="3.6" stroke-linecap="butt"/>
<path d="M 1045.20 610.04 C 1058.79 610.04 1070.45 570.82 1084.04 570.82 C 1097.64 570.82 1109.29 586.51 1122.88 586.51 C 1136.48 586.51 1148.13 594.35 1161.73 594.35 C 1175.32 594.35 1186.97 547.29 1200.57 547.29 C 1214.16 547.29 1225.82 570.82 1239.41 570.82 C 1253.01 570.82 1264.66 594.35 1278.25 594.35 C 1291.85 594.35 1303.50 578.66 1317.09 578.66 C 1330.69 578.66 1342.34 555.13 1355.94 555.13 C 1369.53 555.13 1381.18 531.60 1394.78 531.60 C 1408.37 531.60 1420.03 547.29 1433.62 547.29 C 1447.22 547.29 1458.87 555.13 1472.46 555.13 C 1486.06 555.13 1497.71 508.07 1511.31 508.07 C 1524.90 508.07 1536.55 531.60 1550.15 531.60 C 1563.74 531.60 1575.39 555.13 1588.99 555.13 C 1602.58 555.13 1614.24 539.44 1627.83 539.44 C 1641.43 539.44 1653.08 515.91 1666.67 515.91 C 1680.27 515.91 1691.92 531.60 1705.52 531.60 C 1719.11 531.60 1730.76 547.29 1744.36 547.29 C 1757.95 547.29 1769.61 555.13 1783.20 555.13" fill="none" stroke="#abe0a0" stroke-width="3.1" stroke-linecap="butt"/>
<path d="M 1045.20 649.26 C 1058.79 649.26 1070.45 629.65 1084.04 629.65 C 1097.64 629.65 1109.29 637.49 1122.88 637.49 C 1136.48 637.49 1148.13 641.42 1161.73 641.42 C 1175.32 641.42 1186.97 617.88 1200.57 617.88 C 1214.16 617.88 1225.82 629.65 1239.41 629.65 C 1253.01 629.65 1264.66 641.42 1278.25 641.42 C 1291.85 641.42 1303.50 633.57 1317.09 633.57 C 1330.69 633.57 1342.34 621.81 1355.94 621.81 C 1369.53 621.81 1381.18 629.65 1394.78 629.65 C 1408.37 629.65 1420.03 637.49 1433.62 637.49 C 1447.22 637.49 1458.87 641.42 1472.46 641.42 C 1486.06 641.42 1497.71 617.88 1511.31 617.88 C 1524.90 617.88 1536.55 629.65 1550.15 629.65 C 1563.74 629.65 1575.39 641.42 1588.99 641.42 C 1602.58 641.42 1614.24 633.57 1627.83 633.57 C 1641.43 633.57 1653.08 621.81 1666.67 621.81 C 1680.27 621.81 1691.92 629.65 1705.52 629.65 C 1719.11 629.65 1730.76 637.49 1744.36 637.49 C 1757.95 637.49 1769.61 641.42 1783.20 641.42" fill="none" stroke="#58a83a" stroke-width="3.7" stroke-linecap="butt"/>
<text x="1414.2" y="781.5" text-anchor="middle" class="at">Year</text>
<text transform="translate(1004.5,528.5) rotate(-90)" text-anchor="middle" class="at2">Carbono</text>
<circle cx="1327.7" cy="796" r="6" fill="#57a639"/>
<text x="1337.2" y="800" class="lg">Bioenergy</text>
<circle cx="1406.7" cy="796" r="6" fill="#b2e0a2"/>
<text x="1416.2" y="800" class="lg">Oil</text>
<circle cx="1446.7" cy="796" r="6" fill="#fcc419"/>
<text x="1455.7" y="800" class="lg">Gas</text>
</g>
</svg>
<div class="wb" style="left:220px"></div><div class="wb" style="left:1026px"></div>
</body></html>
